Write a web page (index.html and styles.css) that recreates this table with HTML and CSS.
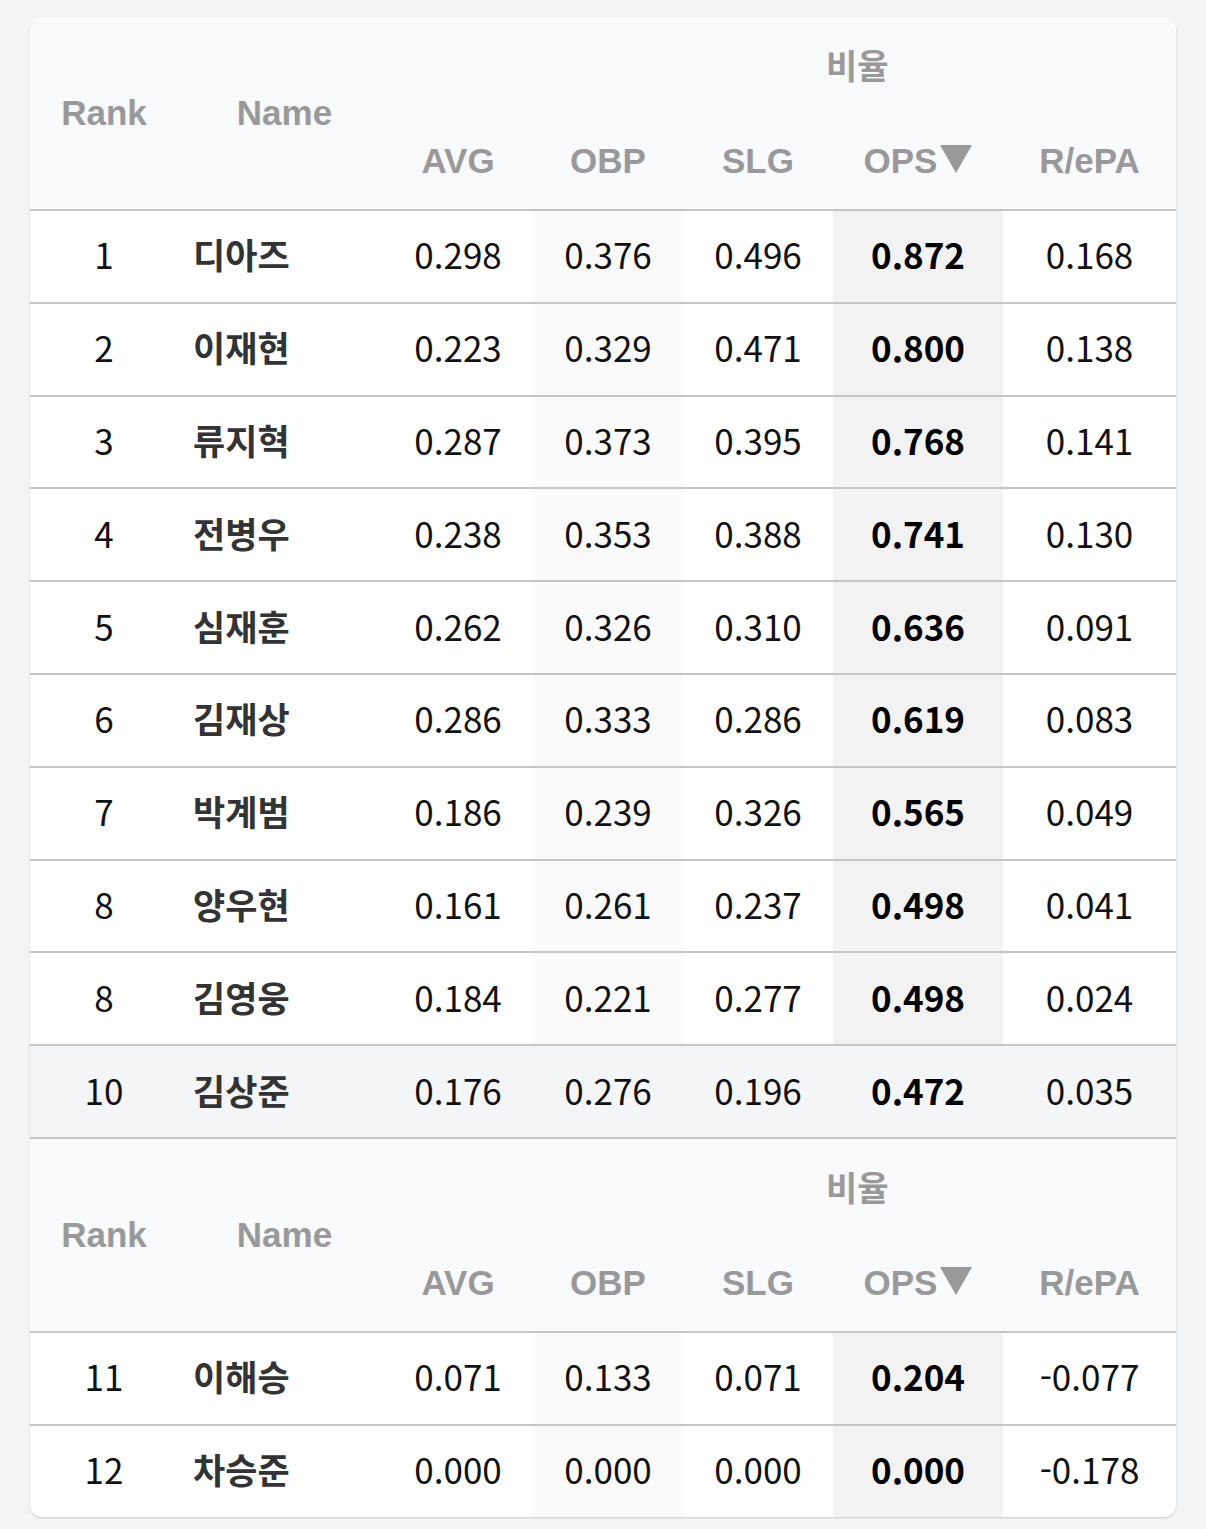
FILE: index.html
```html
<!DOCTYPE html>
<html lang="ko">
<head>
<meta charset="utf-8">
<title>비율 순위</title>
<link rel="stylesheet" href="styles.css">
</head>
<body>
<div class="card">
  <table class="stats">
    <colgroup>
      <col class="c-rank"><col class="c-name"><col class="c-avg"><col class="c-obp"><col class="c-slg"><col class="c-ops"><col class="c-repa">
    </colgroup>
    <thead>
      <tr class="h1">
        <th rowspan="2" class="h-rank">Rank</th>
        <th rowspan="2" class="h-name">Name</th>
        <th colspan="5" class="h-group">비율</th>
      </tr>
      <tr class="h2">
        <th>AVG</th><th>OBP</th><th>SLG</th><th>OPS<svg class="sort" viewBox="0 0 32 28" width="32" height="28" aria-hidden="true"><path d="M0 0 H32 L16 28 Z"/></svg></th><th>R/ePA</th>
      </tr>
    </thead>
    <tbody>
      <tr><td class="rank">1</td><td class="name">디아즈</td><td>0.298</td><td class="obp">0.376</td><td>0.496</td><td class="ops">0.872</td><td>0.168</td></tr>
      <tr><td class="rank">2</td><td class="name">이재현</td><td>0.223</td><td class="obp">0.329</td><td>0.471</td><td class="ops">0.800</td><td>0.138</td></tr>
      <tr><td class="rank">3</td><td class="name">류지혁</td><td>0.287</td><td class="obp">0.373</td><td>0.395</td><td class="ops">0.768</td><td>0.141</td></tr>
      <tr><td class="rank">4</td><td class="name">전병우</td><td>0.238</td><td class="obp">0.353</td><td>0.388</td><td class="ops">0.741</td><td>0.130</td></tr>
      <tr><td class="rank">5</td><td class="name">심재훈</td><td>0.262</td><td class="obp">0.326</td><td>0.310</td><td class="ops">0.636</td><td>0.091</td></tr>
      <tr><td class="rank">6</td><td class="name">김재상</td><td>0.286</td><td class="obp">0.333</td><td>0.286</td><td class="ops">0.619</td><td>0.083</td></tr>
      <tr><td class="rank">7</td><td class="name">박계범</td><td>0.186</td><td class="obp">0.239</td><td>0.326</td><td class="ops">0.565</td><td>0.049</td></tr>
      <tr><td class="rank">8</td><td class="name">양우현</td><td>0.161</td><td class="obp">0.261</td><td>0.237</td><td class="ops">0.498</td><td>0.041</td></tr>
      <tr><td class="rank">8</td><td class="name">김영웅</td><td>0.184</td><td class="obp">0.221</td><td>0.277</td><td class="ops">0.498</td><td>0.024</td></tr>
      <tr class="hl"><td class="rank">10</td><td class="name">김상준</td><td>0.176</td><td class="obp">0.276</td><td>0.196</td><td class="ops">0.472</td><td>0.035</td></tr>
    </tbody>
  </table>
  <table class="stats">
    <colgroup>
      <col class="c-rank"><col class="c-name"><col class="c-avg"><col class="c-obp"><col class="c-slg"><col class="c-ops"><col class="c-repa">
    </colgroup>
    <thead>
      <tr class="h1">
        <th rowspan="2" class="h-rank">Rank</th>
        <th rowspan="2" class="h-name">Name</th>
        <th colspan="5" class="h-group">비율</th>
      </tr>
      <tr class="h2">
        <th>AVG</th><th>OBP</th><th>SLG</th><th>OPS<svg class="sort" viewBox="0 0 32 28" width="32" height="28" aria-hidden="true"><path d="M0 0 H32 L16 28 Z"/></svg></th><th>R/ePA</th>
      </tr>
    </thead>
    <tbody>
      <tr><td class="rank">11</td><td class="name">이해승</td><td>0.071</td><td class="obp">0.133</td><td>0.071</td><td class="ops">0.204</td><td>-0.077</td></tr>
      <tr class="last"><td class="rank">12</td><td class="name">차승준</td><td>0.000</td><td class="obp">0.000</td><td>0.000</td><td class="ops">0.000</td><td>-0.178</td></tr>
    </tbody>
  </table>
</div>
</body>
</html>
```

FILE: styles.css
```css
html, body {
  margin: 0;
  padding: 0;
  background: #f3f4f6;
}

body {
  padding: 17px 30px 12px;
  font-family: "Noto Sans CJK KR", "Noto Sans", sans-serif;
}

.card {
  background: #ffffff;
  border-radius: 12px;
  overflow: hidden;
  box-shadow: 0 1px 2px rgba(0, 0, 0, 0.18);
}

.stats {
  width: 100%;
  border-collapse: collapse;
  table-layout: fixed;
}

.c-rank { width: 148px; }
.c-name { width: 205px; }
.c-avg { width: 150px; }
.c-obp { width: 150px; }
.c-slg { width: 150px; }
.c-ops { width: 170px; }
.c-repa { width: 173px; }

thead {
  background: #f9fafb;
}

thead th {
  font-family: "Liberation Sans", "Noto Sans CJK KR", sans-serif;
  font-weight: 700;
  font-size: 35px;
  color: #999999;
  padding: 0;
  text-align: center;
  line-height: 40px;
}

.h1 th {
  height: 96px;
}

.h2 th {
  height: 96px;
  vertical-align: middle;
}

thead .h2 {
  border-bottom: 2px solid #c6c6c6;
}

.h-rank {
  vertical-align: middle;
}

.h-name {
  padding-left: 8px;
}

.h-group.h-group {
  text-align: left;
  padding-left: 443px;
  vertical-align: middle;
  font-family: "Noto Sans CJK KR", sans-serif;
  font-size: 34px;
}

.sort {
  fill: #999999;
  margin-left: 3px;
  vertical-align: 0;
}

tbody tr {
  border-bottom: 2px solid #c6c6c6;
}

tbody tr.last {
  border-bottom: none;
}

tbody td {
  height: 86.8px;
  padding: 0 0 4px;
  text-align: center;
  vertical-align: middle;
  font-size: 35px;
  line-height: 40px;
  color: #111111;
}

td.name {
  text-align: left;
  padding-left: 15px;
  font-weight: 700;
  color: #333333;
}

td.obp {
  background: #fafafa;
}

td.ops {
  background: #f2f2f2;
  font-weight: 700;
  color: #000000;
}

tr.hl td {
  background: #f4f5f7;
}
```
